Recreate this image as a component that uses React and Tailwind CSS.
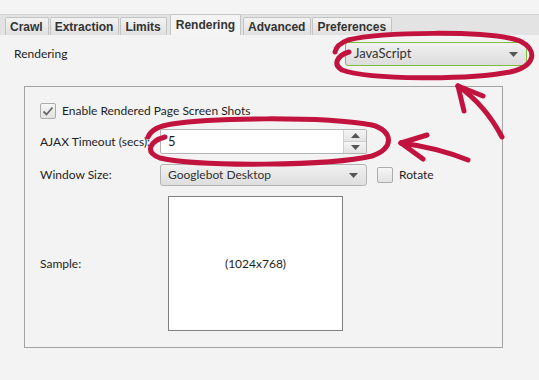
const tabs = ["Crawl", "Extraction", "Limits", "Rendering", "Advanced", "Preferences"];

const Caret = () => (
  <svg width="9" height="5" viewBox="0 0 9 5">
    <path d="M0 0 L9 0 L4.5 5 Z" fill="#555" />
  </svg>
);

const Checkbox = ({ checked }) => (
  <div className="w-[16px] h-[16px] rounded-[2px] border border-[#acacac] bg-gradient-to-b from-[#f6f6f6] to-[#e2e2e2] flex items-center justify-center">
    {checked && (
      <svg width="12" height="10" viewBox="0 0 12 10">
        <path d="M1.5 5.5 L4.5 8.5 L10.5 1.5" fill="none" stroke="#666" strokeWidth="1.8" />
      </svg>
    )}
  </div>
);

const Annotations = () => (
  <svg
    className="absolute inset-0 pointer-events-none"
    width="539"
    height="380"
    viewBox="0 0 539 380"
  >
    <g fill="none" stroke="#c2123e" strokeWidth="5" strokeLinecap="round" strokeLinejoin="round">
      {/* ring round the rendering dropdown */}
      <path d="M349 52 C338 55 332 64 342 70 C370 80 470 80 510 72 C536 66 538 50 520 41 C490 30 380 32 348 40 C340 43 336 47 335 52" />
      {/* arrow up to it */}
      <path d="M502 137 C492 118 478 100 458 86" />
      <path d="M458 86 L483 96" />
      <path d="M458 86 L464 111" />
      {/* ring round the ajax timeout */}
      <path d="M165 137 C150 141 144 152 160 158 C200 167 330 166 372 156 C394 149 394 131 372 125 C320 116 210 118 172 124 C158 126 151 130 148 137" />
      {/* arrow to it */}
      <path d="M401 143 C425 146 448 152 468 160" />
      <path d="M401 143 L427 135" />
      <path d="M401 143 L423 159" />
    </g>
  </svg>
);

const App = () => {
  return (
    <div className="relative w-[539px] h-[380px] overflow-hidden bg-[#f3f3f3] text-[12px] text-[#1e1e1e] font-['Lato','Open_Sans',sans-serif]">
      {/* top strip */}
      <div className="h-[14px] bg-[#f4f4f4]" />

      {/* tab bar */}
      <div className="h-[21px] bg-[#e3e3e3] border-t border-[#d2d2d2] flex items-end pl-[5px] font-['Liberation_Sans',Arial,sans-serif] font-bold text-[12px] text-[#333]">
        {tabs.map((t) => {
          const active = t === "Rendering";
          return active ? (
            <div
              key={t}
              className="h-[21px] mx-[2px] px-[5px] flex items-center bg-[#f4f4f4] border border-b-0 border-[#c4c4c4] rounded-t-[2px]"
            >
              {t}
            </div>
          ) : (
            <div
              key={t}
              className="h-[18px] mr-[1px] pl-[4px] pr-[5px] flex items-center bg-gradient-to-b from-[#f2f2f2] to-[#e0e0e0] border border-b-0 border-[#c4c4c4] rounded-t-[2px]"
            >
              {t}
            </div>
          );
        })}
      </div>

      {/* rendering mode row */}
      <div className="flex items-center pt-[7px] pl-[14px] pr-[12px]">
        <span>Rendering</span>
        <div className="ml-auto w-[182px] h-[24px] rounded-[3px] border border-[#7bbd3c] bg-gradient-to-b from-[#f1f1f1] to-[#dcdcdc] flex items-center pl-[8px] pr-[8px] text-[13px] text-[#333]">
          <span>JavaScript</span>
          <span className="ml-auto">
            <Caret />
          </span>
        </div>
      </div>

      {/* options group */}
      <div className="ml-[24px] mt-[20px] w-[479px] h-[262px] border border-[#a3a3a3] pl-[15px] pt-[16px]">
        <div className="flex items-center gap-[6px] h-[16px]">
          <Checkbox checked />
          <span>Enable Rendered Page Screen Shots</span>
        </div>

        <div className="flex items-center mt-[10px] h-[25px]">
          <span className="w-[120px]">AJAX Timeout (secs):</span>
          <div className="w-[207px] h-[25px] border border-[#b4b4b4] rounded-[2px] bg-white flex">
            <span className="flex-1 flex items-center pl-[7px] text-[13px]">5</span>
            <div className="w-[23px] flex flex-col border-l border-[#cfcfcf]">
              <div className="flex-1 flex items-center justify-center bg-gradient-to-b from-[#f4f4f4] to-[#e4e4e4] border-b border-[#cfcfcf]">
                <svg width="9" height="5" viewBox="0 0 9 5">
                  <path d="M0 5 L9 5 L4.5 0 Z" fill="#555" />
                </svg>
              </div>
              <div className="flex-1 flex items-center justify-center bg-gradient-to-b from-[#f4f4f4] to-[#e4e4e4]">
                <Caret />
              </div>
            </div>
          </div>
        </div>

        <div className="flex items-center mt-[10px] h-[22px]">
          <span className="w-[120px]">Window Size:</span>
          <div className="w-[207px] h-[22px] border border-[#b4b4b4] rounded-[3px] bg-gradient-to-b from-[#f1f1f1] to-[#dedede] flex items-center pl-[7px] pr-[8px] text-[#333]">
            <span>Googlebot Desktop</span>
            <span className="ml-auto">
              <Caret />
            </span>
          </div>
          <div className="ml-[10px] flex items-center gap-[6px]">
            <Checkbox />
            <span>Rotate</span>
          </div>
        </div>

        <div className="flex items-center mt-[10px]">
          <span className="w-[128px]">Sample:</span>
          <div className="w-[175px] h-[135px] border border-[#808080] bg-white flex items-center justify-center">
            (1024x768)
          </div>
        </div>
      </div>

      <Annotations />
    </div>
  );
};

export default App;
